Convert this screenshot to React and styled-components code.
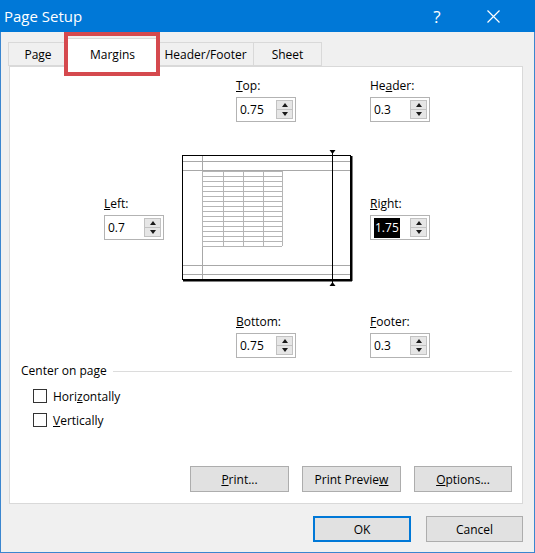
import React from 'react';
import styled, { createGlobalStyle } from 'styled-components';

const GlobalStyle = createGlobalStyle`
  html, body {
    margin: 0;
    padding: 0;
    background: #f0f0f0;
  }
  body {
    font-family: "Open Sans", "Noto Sans", sans-serif;
    font-size: 12px;
    color: #000;
  }
`;

const Window = styled.div`
  width: 535px;
  height: 553px;
  box-sizing: border-box;
  display: flex;
  flex-direction: column;
  background: #f0f0f0;
  border: 1px solid #3b86cf;
  border-top: none;
`;

const TitleBar = styled.div`
  height: 32px;
  flex: none;
  display: flex;
  align-items: center;
  background: #0078d7;
  color: #fff;
  padding: 0 14px 0 4px;
  margin: 0 -1px;
`;

const Title = styled.div`
  flex: 1;
  font-size: 15px;
`;

const CaptionButton = styled.div`
  width: 56px;
  height: 32px;
  display: flex;
  align-items: center;
  justify-content: center;
  font-size: 17px;
`;

const Body = styled.div`
  flex: 1;
  display: flex;
  flex-direction: column;
  padding: 0 11px 0 8px;
`;

const TabRow = styled.div`
  height: 34px;
  display: flex;
  align-items: flex-end;
  padding-left: 0;
`;

const Tab = styled.div`
  position: relative;
  width: ${(p) => p.$w}px;
  height: ${(p) => (p.$active ? 29 : 24)}px;
  box-sizing: border-box;
  margin: ${(p) => (p.$active ? '0 -2px -1px -3px' : '0 0 0 -1px')};
  padding-top: ${(p) => (p.$active ? 2 : 1)}px;
  display: flex;
  align-items: center;
  justify-content: center;
  background: ${(p) => (p.$active ? '#fff' : '#f0f0f0')};
  border: 1px solid #d9d9d9;
  border-bottom: ${(p) => (p.$active ? 'none' : '1px solid #d9d9d9')};
  z-index: ${(p) => (p.$active ? 3 : 1)};
`;

const Highlight = styled.div`
  position: absolute;
  left: -2px;
  right: -1px;
  top: -7px;
  bottom: -9px;
  border: 4px solid #d5494e;
  pointer-events: none;
`;

const Panel = styled.div`
  position: relative;
  z-index: 2;
  height: 438px;
  box-sizing: border-box;
  background: #fff;
  border: 1px solid #d9d9d9;
  display: flex;
  flex-direction: column;
`;

const MarginsGrid = styled.div`
  display: grid;
  grid-template-columns: 60px 18px 54px 60px 56px 18px 60px;
  row-gap: 28px;
  margin-top: 11px;
  padding-left: 94px;
`;

const Field = styled.div`
  grid-column: ${(p) => p.$col};
  grid-row: ${(p) => p.$row};
  align-self: center;
  display: flex;
  flex-direction: column;
  gap: 3px;
`;

const FieldLabel = styled.div`
  height: 16px;
  line-height: 16px;
`;

const SpinBox = styled.div`
  display: flex;
  width: 60px;
  height: 25px;
  box-sizing: border-box;
  border: 1px solid #b3b3b3;
  background: #fff;
  padding: 2px;
`;

const SpinValue = styled.div`
  flex: 1;
  padding-left: 1px;
  line-height: 19px;
`;

const Selected = styled.span`
  background: #000;
  color: #fff;
  padding: 1px 1px 2px;
`;

const SpinButtons = styled.div`
  width: 17px;
  display: flex;
  flex-direction: column;
`;

const SpinArrow = styled.div`
  flex: 1;
  background: #e6e6e6;
  border: 1px solid #c2c2c2;
  margin-top: ${(p) => (p.$down ? -1 : 0)}px;
  display: flex;
  align-items: center;
  justify-content: center;

  &::after {
    content: '';
    border-left: 3.5px solid transparent;
    border-right: 3.5px solid transparent;
    ${(p) => (p.$down ? 'border-top' : 'border-bottom')}: 4px solid #1a1a1a;
  }
`;

const Preview = styled.svg`
  grid-column: 3 / 6;
  grid-row: 2;
  display: block;
`;

const Group = styled.div`
  margin-top: 5px;
  padding-left: 11px;
`;

const GroupTitle = styled.div`
  display: flex;
  align-items: center;
  height: 16px;
  line-height: 16px;

  &::after {
    content: '';
    flex: 1;
    border-top: 1px solid #dcdcdc;
    margin: 1px 10px 0 6px;
  }
`;

const CheckList = styled.div`
  display: flex;
  flex-direction: column;
  gap: 6px;
  padding: 8px 0 0 12px;
`;

const CheckRow = styled.label`
  display: flex;
  align-items: center;
  gap: 6px;
  height: 18px;
`;

const CheckBox = styled.span`
  width: 14px;
  height: 14px;
  box-sizing: border-box;
  border: 1px solid #333;
  background: #fff;
`;

const ButtonRow = styled.div`
  margin-top: ${(p) => (p.$push ? 'auto' : '0')};
  display: flex;
  justify-content: flex-end;
  gap: ${(p) => p.$gap}px;
  padding: ${(p) => p.$top || 0}px ${(p) => p.$right}px ${(p) => p.$bottom}px 0;
`;

const Button = styled.button`
  width: ${(p) => p.$w}px;
  height: 26px;
  box-sizing: border-box;
  background: #e1e1e1;
  border: 1px solid #adadad;
  box-shadow: ${(p) => (p.$primary ? 'inset 0 0 0 1px #0078d7' : 'none')};
  border-color: ${(p) => (p.$primary ? '#0078d7' : '#adadad')};
  font: inherit;
  color: #000;
  padding: 0;
`;

const Spin = ({ label, value, col, row, selected }) => (
  <Field $col={col} $row={row}>
    <FieldLabel>{label}</FieldLabel>
    <SpinBox>
      <SpinValue>{selected ? <Selected>{value}</Selected> : value}</SpinValue>
      <SpinButtons>
        <SpinArrow />
        <SpinArrow $down />
      </SpinButtons>
    </SpinBox>
  </Field>
);

const PagePreview = () => {
  const cols = [20, 41, 61, 81, 100];
  const rows = Array.from({ length: 16 }, (_, i) => 21 + i * 5);
  return (
    <Preview width="172" height="136" viewBox="0 0 172 136">
      <rect x="0.5" y="5.5" width="168" height="124" fill="#fff" stroke="#000" />
      <line x1="169.5" y1="6" x2="169.5" y2="131" stroke="#000" strokeWidth="2" />
      <line x1="1" y1="130.5" x2="170" y2="130.5" stroke="#000" strokeWidth="2" />
      {[11.5, 20.5, 115.5, 124.5].map((y) => (
        <line key={y} x1="1" y1={y} x2="168" y2={y} stroke="#a8a8a8" />
      ))}
      <line x1="20.5" y1="6" x2="20.5" y2="129" stroke="#a8a8a8" />
      {rows.map((y) => (
        <line key={y} x1="20" y1={y + 0.5} x2="100" y2={y + 0.5} stroke="#b5b5b5" />
      ))}
      {cols.map((x) => (
        <line key={x} x1={x + 0.5} y1="21" x2={x + 0.5} y2="96" stroke="#b5b5b5" />
      ))}
      <line x1="150.5" y1="2" x2="150.5" y2="134" stroke="#000" />
      <polygon points="147.5,0 153.5,0 150.5,4" fill="#000" />
      <polygon points="147.5,136 153.5,136 150.5,132" fill="#000" />
    </Preview>
  );
};

export default function App() {
  return (
    <>
      <GlobalStyle />
      <Window>
        <TitleBar>
          <Title>Page Setup</Title>
          <CaptionButton>?</CaptionButton>
          <CaptionButton>
            <svg width="13" height="13" viewBox="0 0 13 13">
              <path d="M0.5 0.5 L12.5 12.5 M12.5 0.5 L0.5 12.5" stroke="#fff" strokeWidth="1.2" />
            </svg>
          </CaptionButton>
        </TitleBar>
        <Body>
          <TabRow>
            <Tab $w={60}>Page</Tab>
            <Tab $w={95} $active>
              Margins
              <Highlight />
            </Tab>
            <Tab $w={97}>Header/Footer</Tab>
            <Tab $w={69}>Sheet</Tab>
          </TabRow>
          <Panel>
            <MarginsGrid>
              <Spin label={<><u>T</u>op:</>} value="0.75" col={4} row={1} />
              <Spin label={<>He<u>a</u>der:</>} value="0.3" col={7} row={1} />
              <Spin label={<><u>L</u>eft:</>} value="0.7" col={1} row={2} />
              <PagePreview />
              <Spin label={<><u>R</u>ight:</>} value="1.75" col={7} row={2} selected />
              <Spin label={<><u>B</u>ottom:</>} value="0.75" col={4} row={3} />
              <Spin label={<><u>F</u>ooter:</>} value="0.3" col={7} row={3} />
            </MarginsGrid>
            <Group>
              <GroupTitle>Center on page</GroupTitle>
              <CheckList>
                <CheckRow>
                  <CheckBox />
                  <span>Hori<u>z</u>ontally</span>
                </CheckRow>
                <CheckRow>
                  <CheckBox />
                  <span><u>V</u>ertically</span>
                </CheckRow>
              </CheckList>
            </Group>
            <ButtonRow $push $gap={13} $right={10} $bottom={11}>
              <Button $w={99}><u>P</u>rint...</Button>
              <Button $w={99}>Print Previe<u>w</u></Button>
              <Button $w={98}><u>O</u>ptions...</Button>
            </ButtonRow>
          </Panel>
          <ButtonRow $gap={15} $right={0} $bottom={0} $top={12}>
            <Button $w={98} $primary>OK</Button>
            <Button $w={97}>Cancel</Button>
          </ButtonRow>
        </Body>
      </Window>
    </>
  );
}
